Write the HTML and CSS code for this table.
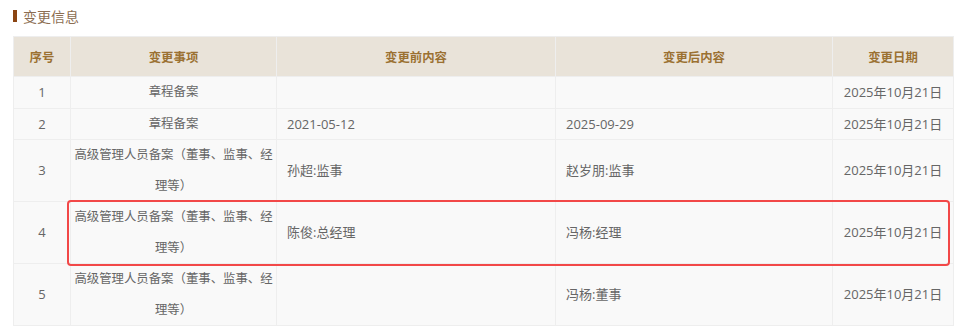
FILE: index.html
```html
<!DOCTYPE html>
<html lang="zh-CN">
<head>
<meta charset="utf-8">
<title>变更信息</title>
<link rel="stylesheet" href="styles.css">
</head>
<body>
<div class="section">
  <h2 class="title"><span class="bar"></span>变更信息</h2>
  <div class="table-wrap">
    <table class="changes">
      <colgroup>
        <col class="c1"><col class="c2"><col class="c3"><col class="c4"><col class="c5">
      </colgroup>
      <thead>
        <tr><th>序号</th><th>变更事项</th><th>变更前内容</th><th>变更后内容</th><th>变更日期</th></tr>
      </thead>
      <tbody>
        <tr><td class="num">1</td><td class="item">章程备案</td><td class="txt"></td><td class="txt"></td><td class="date">2025年10月21日</td></tr>
        <tr><td class="num">2</td><td class="item">章程备案</td><td class="txt">2021-05-12</td><td class="txt">2025-09-29</td><td class="date">2025年10月21日</td></tr>
        <tr><td class="num">3</td><td class="item">高级管理人员备案（董事、监事、经理等）</td><td class="txt">孙超:监事</td><td class="txt">赵岁朋:监事</td><td class="date">2025年10月21日</td></tr>
        <tr><td class="num">4</td><td class="item">高级管理人员备案（董事、监事、经理等）</td><td class="txt">陈俊:总经理</td><td class="txt">冯杨:经理</td><td class="date">2025年10月21日</td></tr>
        <tr><td class="num">5</td><td class="item">高级管理人员备案（董事、监事、经理等）</td><td class="txt"></td><td class="txt">冯杨:董事</td><td class="date">2025年10月21日</td></tr>
      </tbody>
    </table>
    <div class="highlight"></div>
  </div>
</div>
</body>
</html>
```
FILE: styles.css
```css
html, body {
  margin: 0;
  padding: 0;
  background: #ffffff;
}
body {
  font-family: "Open Sans", "Noto Sans CJK SC", sans-serif;
  color: #666666;
}
.section {
  padding: 0 7px 0 13px;
}
.title {
  display: flex;
  align-items: center;
  gap: 6px;
  margin: 0;
  height: 32px;
  font-size: 14px;
  font-weight: normal;
  color: #8c6e52;
  font-family: "Noto Sans CJK SC", sans-serif;
}
.bar {
  display: block;
  width: 4px;
  height: 12px;
  background: #8b4513;
}
.table-wrap {
  position: relative;
  margin-top: 4px;
}
.changes {
  width: 940px;
  border-collapse: collapse;
  table-layout: fixed;
  background: #f9f9f9;
}
.c1 { width: 57px; }
.c2 { width: 206px; }
.c3 { width: 279px; }
.c4 { width: 277px; }
.c5 { width: 121px; }
.changes th,
.changes td {
  border: 1px solid #eeeeee;
  padding: 0;
}
.changes th {
  background: #e9e3d9;
  color: #9b7132;
  font-weight: bold;
  font-size: 12.4px;
  height: 39px;
  font-family: "Noto Sans CJK SC", sans-serif;
}
.changes td {
  font-size: 13px;
  line-height: 30.5px;
  color: #666666;
}
.changes td.num { text-align: center; }
.changes td.item {
  text-align: center;
  font-size: 12.4px;
  padding: 0 2px;
}
.changes td.txt { padding: 0 10px; }
.changes td.date { text-align: center; }
.highlight {
  position: absolute;
  left: 54px;
  top: 164px;
  width: 879px;
  height: 62px;
  border: 2px solid #f24848;
  border-radius: 4px;
  pointer-events: none;
}
```
